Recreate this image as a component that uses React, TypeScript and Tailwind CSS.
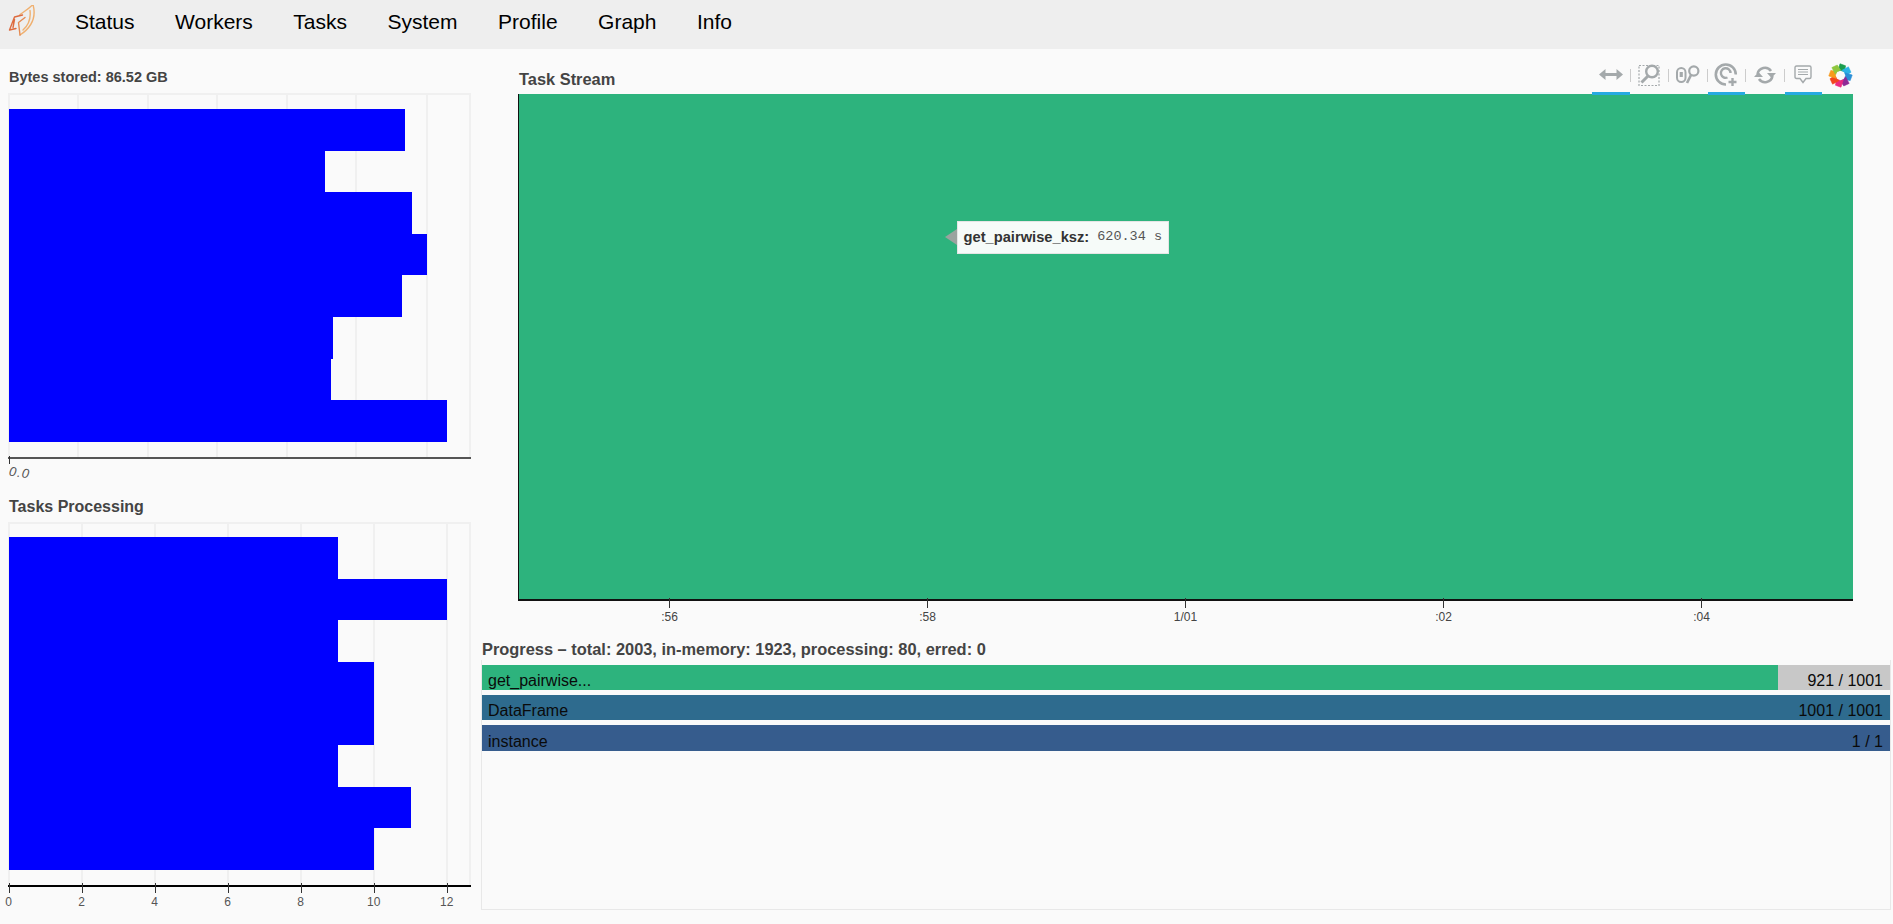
const navItems = ["Status", "Workers", "Tasks", "System", "Profile", "Graph", "Info"];

const bytesBars = [395.5, 316, 403, 418, 393, 323.5, 322, 438];
const bytesGrid = [66.5, 137, 206, 276, 345, 415.5];

const taskValues = [9, 12, 9, 10, 10, 9, 11, 10];
const taskTicks = [0, 2, 4, 6, 8, 10, 12];
const unit = 36.5;

const streamTicks = [
  { label: ":56", left: 149 },
  { label: ":58", left: 407 },
  { label: "1/01", left: 665 },
  { label: ":02", left: 923 },
  { label: ":04", left: 1181 },
];

const petals = ["#1a9d4e", "#2bb3e6", "#2a8fd6", "#8e2a96", "#ec2a80", "#f2451f", "#f79a1c", "#8fc73e"];

function Logo() {
  return (
    <svg width="30" height="40" viewBox="8 4.5 30 40" fill="none" strokeLinejoin="round" strokeLinecap="round" strokeWidth="1.4">
      <path d="M33 4 C28 9 24 11 20 14 M33 4 C36 15 33 26 20 34.5 M30 10 C31 18 28 25 23 29.5" stroke="#efb070" />
      <path d="M20 34.5 L18.5 22 L25 17" stroke="#e58a52" />
      <path d="M9.5 29.5 L14.5 16.5 L22.5 14.5 M9.5 29.5 L16 28 M14.5 19 L13 27" stroke="#dd6b3f" />
    </svg>
  );
}

function Nav() {
  return (
    <header className="flex h-[49px] items-center bg-[#eeeeee]">
      <div className="ml-[8px] flex w-[67px] items-center">
        <Logo />
      </div>
      <nav className="flex gap-[40.5px] pb-[5px] text-[21px] text-black">
        {navItems.map((item) => (
          <a key={item}>{item}</a>
        ))}
      </nav>
    </header>
  );
}

function Title({ size, children }: { size: string; children: React.ReactNode }) {
  return <h3 className={`${size} leading-[16px] font-bold text-[#444444]`}>{children}</h3>;
}

function GridLines({ xs }: { xs: number[] }) {
  return (
    <>
      {xs.map((x) => (
        <div key={x} className="absolute top-0 bottom-0 w-[2px] bg-[#f0f0f0]" style={{ left: x }} />
      ))}
    </>
  );
}

function Bars({ widths }: { widths: number[] }) {
  return (
    <div className="relative -ml-[1px] flex flex-col">
      {widths.map((w, i) => (
        <div key={i} className="h-[41.6px] bg-[#0000ff]" style={{ width: w }} />
      ))}
    </div>
  );
}

function BytesChart() {
  return (
    <section>
      <div className="pl-[1px]">
        <Title size="text-[14.5px]">Bytes stored: 86.52 GB</Title>
      </div>
      <div className="relative mt-[8px] h-[364px] w-[463px] border-x-2 border-t-2 border-[#f0f0f0] pt-[14px]">
        <GridLines xs={bytesGrid} />
        <Bars widths={bytesBars} />
      </div>
      <div className="relative h-[32px] w-[463px] border-t-2 border-[#555555]">
        <div className="absolute top-[-3px] left-[0.7px] h-[8px] w-[1.5px] bg-[#333333]" />
        <span className="absolute top-[4px] left-[1px] rotate-[8deg] text-[13px] tracking-[1px] italic text-[#555555]">0.0</span>
      </div>
    </section>
  );
}

function TasksChart() {
  return (
    <section className="mt-[10px]">
      <div className="pl-[1px]">
        <Title size="text-[16px]">Tasks Processing</Title>
      </div>
      <div className="relative mt-[7px] h-[363px] w-[463px] border-x-2 border-t-2 border-[#f0f0f0] pt-[13px]">
        <GridLines xs={taskTicks.slice(1).map((t) => t * unit - 2)} />
        <Bars widths={taskValues.map((v) => v * unit)} />
      </div>
      <div className="relative h-[32px] w-[463px] border-t-2 border-black">
        {taskTicks.map((t) => (
          <div key={t} className="absolute top-[-4px]" style={{ left: t * unit + 0.7 }}>
            <div className="h-[10px] w-[1.5px] bg-[#333333]" />
            <span className="absolute top-[12px] left-0 -translate-x-1/2 text-[12px] leading-[14px] text-[#555555]">
              {t}
            </span>
          </div>
        ))}
      </div>
    </section>
  );
}

function ToolIcon({ active, children }: { active?: boolean; children: React.ReactNode }) {
  return (
    <div className={`flex h-[31px] w-[37.5px] items-center justify-center border-b-[3px] pb-[6px] ${active ? "border-[#26aae1]" : "border-transparent"}`}>
      {children}
    </div>
  );
}

function Sep() {
  return <div className="mb-[7px] h-[13px] w-px bg-[#cccccc]" />;
}

function BokehLogo() {
  return (
    <svg width="25" height="25" viewBox="0 0 25 25" strokeLinejoin="round">
      {petals.map((color, i) => (
        <path
          key={color}
          d="M9.8 8 L12 0.8 L17.6 2.8 L16.4 8.6 L12.5 7.4 Z"
          fill={color}
          stroke={color}
          strokeWidth="0.6"
          transform={`rotate(${i * 45} 12.5 12.5)`}
        />
      ))}
    </svg>
  );
}

function Toolbar() {
  return (
    <div className="absolute top-[-31px] right-0 flex items-center">
      <ToolIcon active>
        <svg width="24" height="13" viewBox="0 0 24 13" fill="#a4a9ab">
          <path d="M0 6.5 L6.5 1 V5 H17.5 V1 L24 6.5 L17.5 12 V8 H6.5 V12 Z" />
        </svg>
      </ToolIcon>
      <Sep />
      <ToolIcon>
        <svg width="24" height="24" viewBox="0 0 24 24" fill="none" stroke="#a4a9ab">
          <rect x="2" y="2.5" width="20" height="20" strokeDasharray="2 1.5" strokeWidth="1.2" />
          <circle cx="15" cy="8.5" r="5.8" strokeWidth="2.4" fill="#fafafa" />
          <path d="M11 13 L4.5 19.5" strokeWidth="3" />
        </svg>
      </ToolIcon>
      <Sep />
      <ToolIcon>
        <svg width="24" height="20" viewBox="0 0 24 20" fill="none" stroke="#a4a9ab">
          <rect x="1" y="3" width="8.5" height="14" rx="4.25" strokeWidth="2" />
          <path d="M5.25 7 V12" strokeWidth="3.2" />
          <circle cx="17.8" cy="6" r="4.6" strokeWidth="2.2" />
          <path d="M15 10 L11 18" strokeWidth="2.6" />
        </svg>
      </ToolIcon>
      <Sep />
      <ToolIcon active>
        <svg width="24" height="24" viewBox="0 0 24 24" fill="none" stroke="#a4a9ab">
          <path d="M12 21.5 A10 10 0 1 1 21.8 11.5" strokeWidth="2.6" />
          <path d="M13.5 14.5 A4.8 4.8 0 1 1 16.5 10" strokeWidth="2.4" />
          <path d="M18.5 15 V23 M14.5 19 H22.5" strokeWidth="2.4" />
        </svg>
      </ToolIcon>
      <Sep />
      <ToolIcon>
        <svg width="22" height="18" viewBox="0 0 22 18" fill="none" stroke="#a4a9ab" strokeWidth="2.6">
          <path d="M3.5 8 A7.5 7.5 0 0 1 17 5 M18.5 10 A7.5 7.5 0 0 1 5 13" />
          <path d="M13 7 H22 L17.5 12 Z M0 11 H9 L4.5 6 Z" fill="#a4a9ab" stroke="none" />
        </svg>
      </ToolIcon>
      <Sep />
      <ToolIcon active>
        <svg width="18" height="19" viewBox="0 0 18 19" fill="none" stroke="#a4a9ab">
          <path d="M2.5 1 H15.5 Q17 1 17 2.5 V12 Q17 13.5 15.5 13.5 H12 L9 17.5 L6 13.5 H2.5 Q1 13.5 1 12 V2.5 Q1 1 2.5 1 Z" strokeWidth="1.4" />
          <path d="M4 4.5 H14 M4 7 H14 M4 9.5 H14" strokeWidth="1.2" />
        </svg>
      </ToolIcon>
      <div className="mb-[7px] ml-[6px] flex w-[25px] items-center justify-center">
        <BokehLogo />
      </div>
    </div>
  );
}

function StreamTooltip() {
  return (
    <div className="absolute top-[127px] left-[437.5px] flex h-[33px] w-[212px] items-center border border-[#e5e5e5] bg-[#f6fbf9] pl-[6px]">
      <div className="absolute top-[7px] left-[-13px] h-0 w-0 border-y-[8px] border-r-[12px] border-y-transparent border-r-[#9aa39f]" />
      <span className="text-[14.7px] font-bold text-[#333333]">get_pairwise_ksz:</span>
      <span className="ml-[8px] font-['Liberation_Mono',monospace] text-[13.5px] text-[#555555]">620.34 s</span>
    </div>
  );
}

function TaskStream() {
  return (
    <section className="pl-[36px]">
      <div className="h-[25px] pt-[2px] pl-[1px]">
        <Title size="text-[16.4px]">Task Stream</Title>
      </div>
      <div className="relative h-[507px] w-[1335px] border-b-2 border-l-[1.5px] border-[#111111] bg-[#2db37d]">
        <Toolbar />
        <StreamTooltip />
        {streamTicks.map((t) => (
          <div key={t.label} className="absolute top-[504px]" style={{ left: t.left + 0.5 }}>
            <div className="h-[10px] w-[1.5px] bg-[#333333]" />
            <span className="absolute top-[12px] left-[1px] -translate-x-1/2 text-[12px] leading-[14px] text-[#444444]">
              {t.label}
            </span>
          </div>
        ))}
      </div>
    </section>
  );
}

function ProgressRow({ name, count, color, pct }: { name: string; count: string; color: string; pct: number }) {
  return (
    <div className="relative h-[25px] bg-[#c8c8c8] last:h-[26px]">
      <div className="h-full" style={{ width: `${pct}%`, backgroundColor: color }} />
      <div className="absolute inset-0 flex items-end justify-between pr-[7px] pl-[6px] text-[16px] leading-[18px] text-[#0a0a0a]">
        <span>{name}</span>
        <span>{count}</span>
      </div>
    </div>
  );
}

function Progress() {
  return (
    <section className="mt-[40px]">
      <Title size="text-[16.4px]">Progress – total: 2003, in-memory: 1923, processing: 80, erred: 0</Title>
      <div className="mt-[3px] -ml-[1px] h-[250px] w-[1410px] border border-t-0 border-[#e8e8e8] pt-[5px]">
        <div className="flex flex-col gap-[5px]">
          <ProgressRow name="get_pairwise..." count="921 / 1001" color="#2db37d" pct={92.05} />
          <ProgressRow name="DataFrame" count="1001 / 1001" color="#2e6b8e" pct={100} />
          <ProgressRow name="instance" count="1 / 1" color="#365c8d" pct={100} />
        </div>
      </div>
    </section>
  );
}

export default function App() {
  return (
    <div className="h-[924px] overflow-hidden bg-[#fafafa] font-['Liberation_Sans',Arial,sans-serif]">
      <Nav />
      <main className="flex pt-[20px] pl-[8px]">
        <div className="w-[474px]">
          <BytesChart />
          <TasksChart />
        </div>
        <div className="flex-1">
          <TaskStream />
          <Progress />
        </div>
      </main>
    </div>
  );
}
